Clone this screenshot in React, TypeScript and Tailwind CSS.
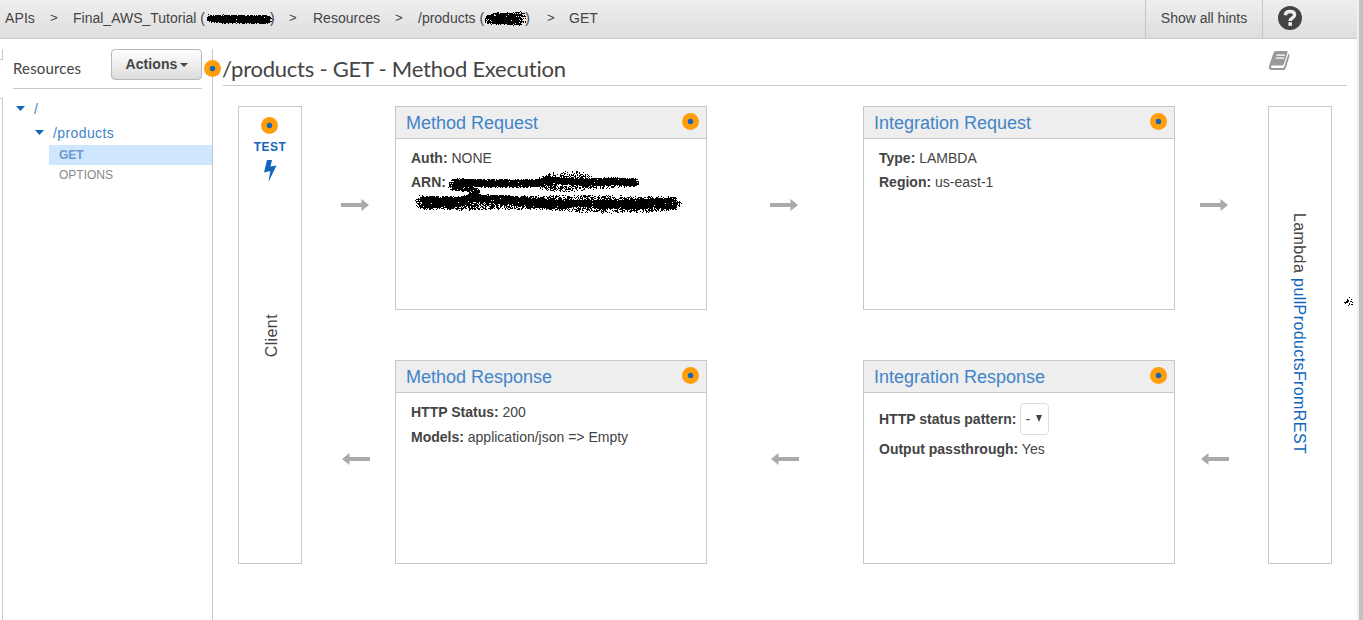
import React from "react";

type Pt = [number, number, number];

function rng(seed: number) {
  let s = seed;
  return () => {
    s = (s * 1664525 + 1013904223) % 4294967296;
    return s / 4294967296;
  };
}

/* Freehand marker: one-pixel specks scattered around a polyline of [x, y, radius]. */
function specks(pts: Pt[], density: number, seed: number) {
  const r = rng(seed);
  let d = "";
  for (let i = 0; i < pts.length - 1; i++) {
    const [x1, y1, r1] = pts[i];
    const [x2, y2, r2] = pts[i + 1];
    const n = Math.round(Math.hypot(x2 - x1, y2 - y1) * density);
    for (let k = 0; k < n; k++) {
      const t = r();
      const a = r() * Math.PI * 2;
      const q = Math.sqrt(r()) * (r1 + (r2 - r1) * t);
      const x = Math.round(x1 + (x2 - x1) * t + Math.cos(a) * q);
      const y = Math.round(y1 + (y2 - y1) * t + Math.sin(a) * q);
      d += `M${x} ${y}h1v1h-1z`;
    }
  }
  return d;
}

function Scribble({ w, h, solid, loose, className, density = 7 }: { w: number; h: number; solid: Pt[]; loose: Pt[][]; className: string; density?: number }) {
  return (
    <svg width={w} height={h} className={className} shapeRendering="crispEdges" aria-hidden="true">
      <path d={specks(solid, 30, 7)} />
      {loose.map((l, i) => (
        <path key={i} d={specks(l, density, 31 + i * 17)} />
      ))}
    </svg>
  );
}

function Hint() {
  return (
    <svg width="17" height="17" viewBox="0 0 17 17" className="block shrink-0" aria-hidden="true">
      <circle cx="8.5" cy="8.5" r="8.5" fill="#ff9d0a" />
      <circle cx="8.5" cy="8.5" r="2.7" fill="#1166bb" />
    </svg>
  );
}

function Arrow({ left = false }: { left?: boolean }) {
  return (
    <svg width="28" height="12" viewBox="0 0 28 12" className={left ? "ml-px rotate-180" : ""} aria-hidden="true">
      <path d="M0 4h20.500V0L28 6l-7.500 6V8H0z" fill="#aaa" />
    </svg>
  );
}

function ArrowColumn({ className }: { className: string }) {
  return (
    <div className={`flex shrink-0 flex-col items-start pt-[93px] ${className}`}>
      <Arrow />
      <div className="h-[242px]" />
      <Arrow left />
    </div>
  );
}

function Card({ title, children }: { title: string; children: React.ReactNode }) {
  return (
    <section className="h-[204px] w-[312px] border border-[#c8c8c8]">
      <header className="flex h-8 items-center justify-between border-b border-[#c8c8c8] bg-[#eee] pr-[7px] pl-[10px]">
        <h2 className="text-[18px] leading-8 text-[#4284c8]">{title}</h2>
        <div className="-mt-0.5"><Hint /></div>
      </header>
      <div className="pl-[15px]">{children}</div>
    </section>
  );
}

function Caret({ className }: { className: string }) {
  return (
    <svg width="9" height="5" viewBox="0 0 9 5" className={className} aria-hidden="true">
      <path d="M0 0h9L4.500 5z" fill="#1166bb" />
    </svg>
  );
}

function Crumbs() {
  return (
    <nav className="flex flex-1 items-center pl-[5px]">
      <span className="w-[45px] tracking-[0.1px]">APIs</span>
      <span className="w-[23px] text-[13px]">&gt;</span>
      <span className="flex w-[216px] items-center whitespace-nowrap">
        Final_AWS_Tutorial (
        <Scribble className="-mr-[3px] h-4 w-[68px] shrink-0" w={68} h={16} solid={[[4, 8, 3], [18, 9, 4], [35, 9, 4], [50, 9, 4], [63, 9, 4]]} loose={[[[4, 8, 4], [63, 9, 4]]]} />
        )
      </span>
      <span className="w-6 text-[13px]">&gt;</span>
      <span className="w-[82px]">Resources</span>
      <span className="w-[23px] text-[13px]">&gt;</span>
      <span className="flex w-[129px] items-center whitespace-nowrap">
        /products (
        <Scribble className="-mr-px -ml-px h-[18px] w-[43px] shrink-0" w={43} h={18} solid={[[5, 10, 4], [14, 9, 6], [24, 9, 6], [32, 10, 6], [37, 8, 7]]} loose={[[[5, 10, 5], [38, 9, 7]]]} />
        )
      </span>
      <span className="w-[22px] text-[13px]">&gt;</span>
      <span>GET</span>
    </nav>
  );
}

export default function App() {
  return (
    <div className="flex h-[620px] w-[1363px] overflow-hidden bg-white font-['Liberation_Sans',Arial,sans-serif] text-[14px] text-[#444]">
      <div className="flex w-[1357px] flex-col">
        <header className="flex h-[39px] shrink-0 border-b border-[#ccc] bg-linear-to-b from-[#eee] to-[#dedede]">
          <div className="flex flex-1 pb-[2px]"><Crumbs /></div>
          <div className="flex w-[117px] items-center justify-center border-l border-[#c5c5c5] pb-[2px]">Show all hints</div>
          <div className="flex w-[95px] items-center border-l border-[#c5c5c5] pb-[2px] pl-[15px]">
            <svg width="24" height="24" viewBox="0 0 24 24" aria-hidden="true">
              <circle cx="12" cy="12" r="12" fill="#444" />
              <path d="M7.200 9.200C7.600 6.500 9.500 5.500 12 5.500c2.700 0 4.600 1.300 4.600 3.500 0 3-4.400 2.900-4.400 6" fill="none" stroke="#eee" strokeWidth="3.400" />
              <path d="M10.400 16.200h3.600v3.600h-3.600z" fill="#eee" />
            </svg>
          </div>
        </header>

        <div className="flex flex-1">
          <div className="flex w-[3px] flex-col pt-[10px]">
            <div className="h-[11px] border-r border-b border-[#c8c8c8]" />
            <div className="mt-[38px] flex-1 border-t border-r border-[#c8c8c8]" />
          </div>

          <aside className="flex w-[209px] flex-col pt-[10px]">
            <div className="mr-[10px] ml-[10px] flex h-10 items-start justify-between border-b border-[#c8c8c8]">
              <h1 className="pt-2 font-['Lato',sans-serif] text-[15px] leading-[22px] tracking-[0.15px]">Resources</h1>
              <button className="flex h-[31px] w-[91px] items-center justify-center gap-[2px] rounded-[4px] border border-[#b9b9b9] bg-linear-to-b from-white to-[#dcdcdc] text-[14px] font-bold tracking-[0.1px]">
                Actions
                <svg width="8" height="4" viewBox="0 0 8 4" className="mt-px" aria-hidden="true"><path d="M0 0h8L4 4z" fill="#444" /></svg>
              </button>
            </div>
            <div className="flex flex-col">
              <div className="mt-2 flex h-6 items-center pl-[13px] text-[14px] text-[#4284c8]"><Caret className="mr-[9px] -mt-0.5" />/</div>
              <div className="flex h-6 items-center pl-8 text-[14px] tracking-[0.400px] text-[#4284c8]"><Caret className="mr-[9px] -mt-0.5" />/products</div>
              <div className="ml-[46px] h-5 bg-[#cfe6ff] pl-[10px] text-[12px] leading-5 font-bold text-[#6d9aca]">GET</div>
              <div className="ml-[46px] h-5 pl-[10px] text-[12px] leading-5 text-[#888]">OPTIONS</div>
            </div>
          </aside>

          <main className="flex flex-1 flex-col pt-[10px]">
            <div className="flex flex-1 flex-col border-l border-[#c8c8c8]">
              <div className="mr-[10px] ml-[10px] flex h-[37px] items-start border-b border-[#c8c8c8]">
                <div className="-ml-[19px] pt-[11px]"><Hint /></div>
                <h1 className="ml-px flex-1 pt-[6px] font-['Lato',sans-serif] text-[22px] leading-[28px] tracking-[-0.24px]">/products - GET - Method Execution</h1>
                <svg width="21" height="19" viewBox="0 0 21 19" className="mt-[2px] mr-[57px]" aria-hidden="true">
                  <path d="M7 0h10.500q1.500 0 1 1.500L15 12.800q-.5 1.700-2 1.700H3.500q-1.300 0-1.600 1Q1.700 17 3 17h10.500q1.300 0 1.700-1.200L19.300 3q1.700.3 1.200 2l-3.700 12q-.6 2-2.600 2H3q-3.200 0-3-3 .1-1.500.7-3L4.500 2Q5.200 0 7 0z" fill="#999" />
                  <path d="M7.500 4.200h8.500M6.700 7.200h8.500" stroke="#fff" strokeWidth="1.300" />
                </svg>
              </div>

              <div className="mt-5 ml-[25px] flex">
                <div className="flex h-[458px] w-16 shrink-0 flex-col items-center border border-[#c8c8c8] pt-[10px]">
                  <div className="mr-px"><Hint /></div>
                  <div className="mt-1 text-[12px] leading-[18px] font-bold tracking-[0.4px] text-[#1166bb]">TEST</div>
                  <svg width="13" height="22" viewBox="0 0 13 22" className="mt-1" aria-hidden="true">
                    <path d="M3 0h5L6.500 6.500 12.500 5.500 4.500 22l1.800-11L0 12.500z" fill="#1166bb" />
                  </svg>
                  <div className="mt-[132px] ml-[3px] rotate-180 text-[16px] leading-[18px] tracking-[0.4px] [writing-mode:vertical-rl]">Client</div>
                </div>

                <ArrowColumn className="w-[93px] pl-[39px]" />

                <div className="flex shrink-0 flex-col gap-[50px]">
                  <Card title="Method Request">
                    <div className="pt-[7px] leading-6"><b>Auth:</b> NONE</div>
                    <div className="relative h-9 leading-6">
                      <b>ARN:</b>
                      <Scribble
                        className="absolute top-[-6px] left-0"
                        w={280} h={50}
                        solid={[[42, 19, 5], [50, 18, 4], [75, 19, 4], [100, 19, 4], [125, 19, 4], [138, 15, 4], [155, 17, 3], [180, 18, 4], [200, 17, 4], [224, 18, 4]]}
                        loose={[[[128, 18, 6], [145, 14, 7], [170, 14, 7], [180, 17, 6]], [[130, 20, 5], [150, 23, 5], [180, 20, 5], [224, 18, 4]]]}
                      />
                      <Scribble
                        className="absolute top-[-6px] left-0"
                        w={280} h={50}
                        solid={[[10, 38, 6], [22, 38, 6], [36, 38, 5], [50, 37, 5], [62, 33, 5], [70, 34, 4], [95, 35, 4], [120, 38, 4], [145, 40, 5], [165, 39, 3], [210, 40, 5], [240, 39, 5], [264, 39, 6]]}
                        loose={[[[10, 38, 7], [50, 39, 7], [90, 38, 7], [130, 38, 7], [160, 39, 9], [200, 40, 9], [240, 40, 8], [264, 39, 7]], [[40, 22, 4], [56, 24, 3], [66, 27, 3], [62, 33, 4]]]}
                        density={15}
                      />
                    </div>
                  </Card>
                  <Card title="Method Response">
                    <div className="pt-[7px] leading-6"><b>HTTP Status:</b> 200</div>
                    <div className="pt-px leading-6"><b>Models:</b> application/json =&gt; Empty</div>
                  </Card>
                </div>

                <ArrowColumn className="w-[156px] pl-[63px]" />

                <div className="flex shrink-0 flex-col gap-[50px]">
                  <Card title="Integration Request">
                    <div className="pt-[7px] leading-6"><b>Type:</b> LAMBDA</div>
                    <div className="leading-6"><b>Region:</b> us-east-1</div>
                  </Card>
                  <Card title="Integration Response">
                    <div className="flex items-center gap-1 pt-[10px]">
                      <b>HTTP status pattern:</b>
                      <span className="flex h-8 w-[29px] items-center rounded-[4px] border border-[#ddd] pl-1">
                        -
                        <svg width="6" height="7" viewBox="0 0 6 7" className="mb-px ml-[6px]" aria-hidden="true"><path d="M0 0h6L3 7z" fill="#444" /></svg>
                      </span>
                    </div>
                    <div className="pt-[2px] leading-6"><b>Output passthrough:</b> Yes</div>
                  </Card>
                </div>

                <ArrowColumn className="w-[93px] pl-[25px]" />

                <div className="flex h-[458px] w-16 shrink-0 flex-col items-center border border-[#c8c8c8] pt-[106px]">
                  <div className="mr-[2px] text-[16px] leading-[18px] tracking-[0.4px] whitespace-nowrap [writing-mode:vertical-rl]">
                    Lambda <span className="text-[#1166bb]">pullProductsFromREST</span>
                  </div>
                </div>
                <svg width="10" height="10" className="mt-[191px] ml-3 shrink-0" shapeRendering="crispEdges" aria-hidden="true">
                  <path d="M0 5h2v-1h1v-1h2v2h-1v1h-2v1h-1v-1h-1zM5 0h1v1h-1zM3 2h1v1h-1zM7 2h1v1h-1zM6 4h2v1h-2zM5 6h1v2h-1zM8 5h1v1h-1zM7 7h2v1h-2zM4 8h1v1h-1z" />
                </svg>
              </div>
            </div>
          </main>
        </div>
      </div>
      <div className="w-[2px] bg-[#f0f0f0]" />
      <div className="w-1 bg-[#c1c1c1]" />
    </div>
  );
}
